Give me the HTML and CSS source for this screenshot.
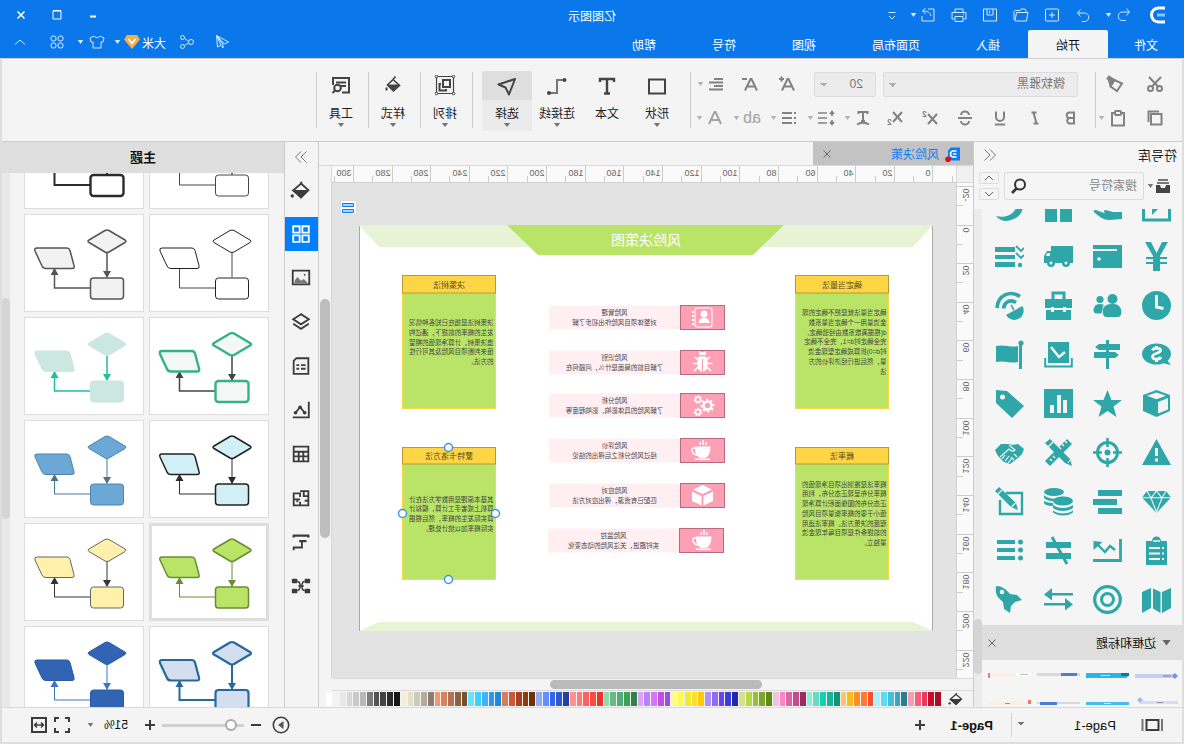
FILE: index.html
```html
<!DOCTYPE html>
<html lang="zh-CN">
<head>
<meta charset="utf-8">
<title>亿图图示</title>
<link rel="stylesheet" href="styles.css">
</head>
<body>
<div class="app">
<header class="top">
  <div class="titlebar">
    <div class="quick">
      <svg class="logo" viewBox="0 0 16 18"><path d="M0 2H6.500A7 7 0 0 1 6.500 16H0" fill="none" stroke="#fff" stroke-width="3"/><path d="M0 9H8" stroke="#8cc3ff" stroke-width="3"/></svg>
      <button class="tb undo" aria-label="撤销"><svg class="i16" viewBox="0 0 16 16"><path d="M5.500 1.500 2.500 5l3 3.500M3 5h6.500a4 4 0 0 1 0 8.500H6"/></svg></button><i class="caret light"></i>
      <button class="tb redo" aria-label="恢复"><svg class="i16" viewBox="0 0 16 16"><path d="M10.500 2.500 13.500 6l-3 3.500M13 6H6.500a4 4 0 0 0 0 8.500H9"/></svg></button>
      <button class="tb" aria-label="新建"><svg class="i16" viewBox="0 0 16 16"><rect x="1.500" y="2" width="13" height="12" rx="1"/><path d="M8 5v6M5 8h6"/></svg></button>
      <button class="tb" aria-label="打开"><svg class="i16" viewBox="0 0 16 16"><path d="M1 5.500h11.500l1.500 8.500H2.500zM3 5.500V3.500l1-1.500h4l1 1.500h5l1 1V13"/></svg></button>
      <button class="tb" aria-label="保存"><svg class="i16" viewBox="0 0 16 16"><path d="M1.500 2h13v12h-13zM5 2v6h6V2M8.500 4v2"/></svg></button>
      <button class="tb" aria-label="打印"><svg class="i16" viewBox="0 0 16 16"><path d="M4 5.500V2h8v3.500M3 12H1V5.500h14V12h-2M4 9.500h8V14.500H4zM3 7.500h1"/></svg></button>
      <button class="tb" aria-label="导出"><svg class="i16" viewBox="0 0 16 16"><path d="M8 2H2v12h12V9M5 9c1-4 4-5 8-5M10.500 1 13.500 4l-3 3"/></svg></button><i class="caret light near"></i>
      <button class="tb more" aria-label="更多"><svg class="i16" viewBox="0 0 16 16"><path d="M4.500 5.500h7M5 9l3 3 3-3"/></svg></button>
    </div>
    <h1 class="apptitle">亿图图示</h1>
    <div class="win">
      <button aria-label="最小化"><svg class="i16" viewBox="0 0 16 16"><path d="M5 9.500h6" stroke-width="2"/></svg></button>
      <button aria-label="最大化"><svg class="i16" viewBox="0 0 16 16"><path d="M4 4h8v8H4zM4 3.500h8"/></svg></button>
      <button aria-label="关闭"><svg class="i16" viewBox="0 0 16 16"><path d="M4.500 4.500l7 7M11.500 4.500l-7 7" stroke-width="1.600"/></svg></button>
    </div>
  </div>
  <nav class="tabs">
    <a class="tab first" href="#">文件</a><a class="tab on" href="#">开始</a><a class="tab" href="#">插入</a><a class="tab wide" href="#">页面布局</a><a class="tab" href="#">视图</a><a class="tab" href="#">符号</a><a class="tab" href="#">帮助</a>
    <div class="account">
      <button aria-label="发送"><svg class="i16" viewBox="0 0 16 16"><path d="M13.500 1.500 1.500 8l4 2zM13.500 1.500 12.500 13 9 11zM13.500 1.500 7 10.500V14L9 11.500"/></svg></button>
      <button class="share" aria-label="分享"><svg class="i16" viewBox="0 0 16 16"><circle cx="4" cy="8" r="2.500"/><circle cx="12.500" cy="3.500" r="2"/><circle cx="12.500" cy="12.500" r="2"/><path d="M6.500 7l4-2.500M6.500 9l4 2.500"/></svg></button>
      <button class="user">大米<svg class="gem" viewBox="0 0 16 14"><path d="M3 0h10l3 4.500L8 14 0 4.500z" fill="#f3b04a"/><path d="M4.500 4 8 8.500 11.500 4" fill="none" stroke="#fff" stroke-width="1.600"/></svg></button><i class="caret light"></i>
      <button class="skin" aria-label="皮肤"><svg class="i16" viewBox="0 0 16 16"><path d="M5 2C6 4 10 4 11 2l4 2-1 4h-2v6H4V8H2L1 4z"/></svg></button><i class="caret light"></i>
      <button class="apps" aria-label="应用"><svg class="i16" viewBox="0 0 16 16"><rect x="2" y="2" width="5" height="5" rx="2"/><rect x="9" y="2" width="5" height="5" rx="2"/><rect x="2" y="9" width="5" height="5" rx="2"/><rect x="9" y="9" width="5" height="5" rx="2"/></svg></button>
      <button class="fold" aria-label="折叠"><svg class="i16" viewBox="0 0 16 16"><path d="M3 10.500 8 6l5 4.500"/></svg></button>
    </div>
  </nav>
</header>

<div class="frame">
<section class="ribbon" aria-label="工具栏">
  <div class="grp clip">
    <div class="row"><button class="rb w30" aria-label="剪切"><svg class="i18" viewBox="0 0 18 18"><path d="M3 2l9 9.500M15 2 6 11.500"/><circle cx="4.500" cy="13.500" r="2.500"/><circle cx="13.500" cy="13.500" r="2.500"/></svg></button><button class="rb w30" aria-label="格式刷"><svg class="i18" viewBox="0 0 18 18"><path d="M2 8.500 9.500 5l4 6.500-6.500 4.500z"/><path d="M9.500 5l4-2.500 1.500-1 1.500 2-1.500 2-1.500 5z" fill="#828282"/></svg></button></div>
    <div class="row"><button class="rb w30" aria-label="复制"><svg class="i18" viewBox="0 0 18 18"><path d="M2.500 5H13v10.500H2.500zM5 2.500h10.500V13"/></svg></button><button class="rb w24" aria-label="粘贴"><svg class="i18" viewBox="0 0 18 18"><path d="M6 4H3v12.500h12V4h-3"/><rect x="6" y="2" width="6" height="4" rx="1"/></svg></button><i class="caret"></i></div>
  </div>
  <div class="grp font">
    <div class="row r1"><select class="sel face" aria-label="字体"><option>微软雅黑</option></select><select class="sel size" aria-label="字号"><option>20</option></select>
      <button class="rb w30 gap" aria-label="增大字号"><svg class="i18" viewBox="0 0 18 18"><path d="M2 15.500 7.500 4h1L14 15.500M4.500 11.500h7M12 4h5M14.500 1.500v5"/></svg></button>
      <button class="rb w30" aria-label="减小字号"><svg class="i18" viewBox="0 0 18 18"><path d="M2 15.500 7.500 4h1L14 15.500M4.500 11.500h7M12 4h5"/></svg></button>
      <span class="combo"><button class="rb w24" aria-label="对齐"><svg class="i18" viewBox="0 0 18 18"><path d="M2 4h9M2 7.500h14M2 11h9M2 14.500h14"/></svg></button><i class="caret"></i></span></div>
    <div class="row">
      <button class="rb w35" aria-label="加粗"><svg class="i18" viewBox="0 0 18 18"><path d="M5 3.500h4.500a2.500 2.500 0 0 1 0 5.500H5zM5 9h5a3 3 0 0 1 0 5.500H5z"/></svg></button><button class="rb w35" aria-label="斜体"><svg class="i18" viewBox="0 0 18 18"><path d="M7.500 3.500h5M5.500 14.500h5M10.500 3.500l-3 11"/></svg></button><button class="rb w35" aria-label="下划线"><svg class="i18" viewBox="0 0 18 18"><path d="M5 2.500V8a4 4 0 0 0 8 0V2.500M4 15.500h10"/></svg></button><button class="rb w35" aria-label="删除线"><svg class="i18" viewBox="0 0 18 18"><path d="M13 6a4 3.500 0 0 0-8 0M2 9h14M5 12a4 3.500 0 0 0 8 0"/></svg></button><button class="rb w35" aria-label="上标"><svg class="i18" viewBox="0 0 18 18"><path d="M2 5l9 10M11 5 2 15"/><path d="M13 4c0-2 3-2 3 0 0 1-3 2-3 3.500h3.500" stroke-width="1.200"/></svg></button><button class="rb w35" aria-label="下标"><svg class="i18" viewBox="0 0 18 18"><path d="M2 3l9 10M11 3 2 13"/><path d="M13 12c0-2 3-2 3 0 0 1-3 2-3 3.500h3.500" stroke-width="1.200"/></svg></button>
      <span class="combo c0"><button class="rb w24" aria-label="文字效果"><svg class="i18" viewBox="0 0 18 18"><path d="M4.500 5V3h9v2M9 3v9M7 12h4M3 15.500c4-2.500 8-2.500 12 0"/></svg></button><i class="caret"></i></span><span class="combo"><button class="rb w24" aria-label="行距"><svg class="i18" viewBox="0 0 18 18"><path d="M8 4h9M8 9h9M8 14h9M3 3v4M3 11v4M1 5l2-2.500L5 5M1 13l2 2.500L5 13" stroke-width="1.700"/></svg></button><i class="caret"></i></span><span class="combo"><button class="rb w24" aria-label="项目符号"><svg class="i18" viewBox="0 0 18 18"><path d="M6 4h10M6 9h10M6 14h10M2 4h2M2 9h2M2 14h2"/></svg></button><i class="caret"></i></span><span class="combo"><button class="rb w24 ab">ab</button><i class="caret"></i></span><span class="combo"><button class="rb w24" aria-label="字体颜色"><svg class="i18 pale" viewBox="0 0 18 18"><path d="M3 15 8.500 3h1L15 15M5.500 11h7"/></svg></button><i class="caret"></i></span>
    </div>
  </div>
  <div class="grp big">
    <button class="bb"><svg class="i24" viewBox="0 0 24 24"><path d="M4 4.500h16v14H4z"/></svg><span>形状</span><i class="caret dark"></i></button>
    <button class="bb"><svg class="i24" viewBox="0 0 24 24"><path d="M5 7V4h14v3M12 4v14.500M9 18.500h6" stroke-width="2.400"/></svg><span>文本</span></button>
    <button class="bb"><svg class="i24" viewBox="0 0 24 24"><path d="M4 5h8v13h7" stroke="#777"/><circle cx="4.500" cy="5" r="2" fill="#444" stroke="none"/><circle cx="20" cy="18" r="2" fill="#444" stroke="none"/></svg><span>连接线</span><i class="caret dark"></i></button>
    <button class="bb sel-on"><svg class="i24" viewBox="0 0 24 24"><path d="M4 4 20.500 9.500 13.500 12.500 10 19.500z" stroke-linejoin="round"/></svg><span>选择</span><i class="caret dark"></i></button>
  </div>
  <div class="grp one"><button class="bb"><svg class="i24" viewBox="0 0 24 24"><path d="M3.500 1.500h17v17h-17z" stroke-width="1.200"/><path d="M7 5h7v7H7zM16 9h1.500v6.500H11V14"/><g fill="#f4f4f4" stroke-width="1"><circle cx="3.500" cy="1.500" r="1.300"/><circle cx="20.500" cy="1.500" r="1.300"/><circle cx="3.500" cy="18.500" r="1.300"/><circle cx="20.500" cy="18.500" r="1.300"/></g></svg><span>排列</span><i class="caret dark"></i></button></div>
  <div class="grp one"><button class="bb"><svg class="i24" viewBox="0 0 24 24"><path d="M9.500 1.500 12 4.500M12 4.500 17.500 10l-6 6-6-5.500z" stroke-width="1.600"/><path d="M5.500 10h12.500l-6.500 6z" fill="#444" stroke-width="1"/><path d="M18.500 12.500v3" stroke-width="2"/></svg><span>样式</span><i class="caret dark"></i></button></div>
  <div class="grp one"><button class="bb"><svg class="i24" viewBox="0 0 24 24"><path d="M11 17.500H4V3h16v7M7 7.500h10M7 11h6"/><circle cx="15.500" cy="13" r="3.300"/><path d="M18 15.500l2.500 2.500"/></svg><span>工具</span><i class="caret dark"></i></button></div>
</section>

<main class="work">
<aside class="lib">
  <div class="libhead"><h2>符号库</h2><button aria-label="收起"><svg class="i16 g" viewBox="0 0 16 16"><path d="M8 2.500 2.500 8 8 13.500M13.500 2.500 8 8l5.500 5.500"/></svg></button></div>
  <div class="find">
    <button class="drawer" aria-label="库菜单"><svg viewBox="0 0 16 16"><path d="M3 1h10v2H3zM2 4h12v2H2z" fill="#777"/><path d="M1 7h4l1 3h4l1-3h4v8H1z" fill="#444"/></svg></button><i class="caret dark"></i>
    <label class="search"><input type="text" placeholder="搜索符号" aria-label="搜索符号"><svg viewBox="0 0 16 16"><circle cx="7" cy="6.500" r="5" fill="none" stroke="#333" stroke-width="2"/><path d="M10.500 10.500 15 15" stroke="#333" stroke-width="2.600"/></svg></label>
    <div class="updown"><button aria-label="上"><svg viewBox="0 0 12 8"><path d="M2 6l4-4 4 4"/></svg></button><button aria-label="下"><svg viewBox="0 0 12 8"><path d="M2 2l4 4 4-4"/></svg></button></div>
  </div>
  <div class="libbody">
    <div class="libcol">
    <div class="symwrap"><div class="syms">
      <svg viewBox="0 0 29 29"><path d="M1.500 10v17h26V10" fill="none" stroke="currentColor" stroke-width="3"/><path d="M11 14h8v8z"/></svg>
      <svg viewBox="0 0 29 29"><path d="M0 19h9l7-2c3 0 3 3 0 3h-4 6l8-3c3 0 3 2 1 3-5 4-8 7-14 7-5 0-8-1-13-1z"/></svg>
      <svg viewBox="0 0 29 29"><path d="M1 12h12v17H1zM16 12h12v17H16z"/></svg>
      <svg viewBox="0 0 29 29"><path d="M1 14c6 0 7 1 8 3 4 6 11 8 19 6-4 5-10 6-15 4C6 25 2 21 1 14z"/></svg>

      <svg viewBox="0 0 29 29"><path d="M3 0h6l5.500 11L20 0h6l-8 14v1h7v2h-7v3h7v2h-7v7h-7v-7H4v-2h7v-3H4v-2h7v-1z"/></svg>
      <svg viewBox="0 0 29 29"><path d="M0 3h29v23H0z"/><path d="M5 8h24" class="w" stroke-width="2"/><circle cx="23" cy="17" r="1.800" class="wf"/></svg>
      <svg viewBox="0 0 29 29"><path d="M0 4h22v5h4l3 5v7H0z"/><circle cx="7" cy="21" r="4" /><circle cx="22" cy="21" r="4"/><circle cx="7" cy="21" r="1.500" class="wf"/><circle cx="22" cy="21" r="1.500" class="wf"/><path d="M23 11h3l1 3h-4z" class="wf"/></svg>
      <svg viewBox="0 0 29 29"><path d="M9 5h20v5H9zM9 13h20v4H9zM9 20h20v5H9z"/><circle cx="4" cy="23" r="2.200"/><path d="M8 4 3 9 0 6M8 11l-5 5-3-3" fill="none" stroke="currentColor" stroke-width="1.800"/></svg>

      <svg viewBox="0 0 29 29"><circle cx="14.500" cy="14.500" r="14.500"/><path d="M14.500 4v12l-7 1.500" class="w" stroke-width="3"/></svg>
      <svg viewBox="0 0 29 29"><circle cx="9.500" cy="8" r="5"/><path d="M1 18c2-4 4-5 8.500-5s8 1 9.500 5c1 5-1 8-3 8H4c-3 0-4-4-3-8z"/><circle cx="22" cy="8.500" r="3.600"/><path d="M18.500 13.500c5-1.500 9 0 10 5 0 3-1 4-3 4h-5z"/></svg>
      <svg viewBox="0 0 29 29"><path d="M9 9V2h11v7" fill="none" stroke="currentColor" stroke-width="3"/><path d="M1 8h27v9H1zM2 19h25v10H2z"/><path d="M7 16h3v5H7zM19 16h3v5h-3z" class="wf"/></svg>
      <svg viewBox="0 0 29 29"><path d="M4 5.500C14-1 26 4 27 17" fill="none" stroke="currentColor" stroke-width="3.600"/><path d="M8 11.500c6-4 12 0 12.500 6" fill="none" stroke="currentColor" stroke-width="3.600"/><path d="M1.500 15 18 24A9 9 0 0 1 1.500 15z"/><path d="M10 19l3-5" stroke="currentColor" stroke-width="1.500"/></svg>

      <svg viewBox="0 0 29 29"><ellipse cx="14.500" cy="14" rx="14.500" ry="10.500"/><path d="M4 20 0 25l9-2z"/><path d="M18.500 10.500c-1-3-8-3-8 0s8 2.500 8 6-7 3.500-8.500.5M14.500 6v3M14.500 18v4" class="w" stroke-width="2.800"/></svg>
      <svg viewBox="0 0 29 29"><path d="M13 0h3v29h-3z"/><path d="M2 4h21l4 3-4 3H2zM28 12v6H7l-4-3 4-3z"/></svg>
      <svg viewBox="0 0 29 29"><path d="M4 2h21v21H4z"/><path d="M22 7l-8 10-6-5" class="w" stroke-width="2.400"/><path d="M1.200 18v8.500h26.600V18" fill="none" stroke="currentColor" stroke-width="2"/></svg>
      <svg viewBox="0 0 29 29"><circle cx="3" cy="3" r="2.600"/><path d="M2 4h3v25H2zM6 6c7 2 13-2 22 0v16c-9-2-14 2-22 0z"/></svg>

      <svg viewBox="0 0 29 29"><path d="M14.500 1 28 6v16l-13.500 6L1 22V6z"/><path d="M14.500 3.500 24 6.700l-9.500 3.600L5 6.700zM3 9l10 4v11.500L3 20.500z" class="wf"/></svg>
      <svg viewBox="0 0 29 29"><path d="M14.500 1l4 10H29l-8.500 6.500L23.500 28l-9-6-9 6 3-10.500L0 11h10.500z"/></svg>
      <svg viewBox="0 0 29 29"><path d="M0 0h29v29H0z"/><path d="M6 11h4v13H6zM12 6h4v18h-4zM19 16h4v8h-4z" class="wf"/></svg>
      <svg viewBox="0 0 29 29"><path d="M17 2 28 1v13L12 29 0 17z"/><circle cx="21.500" cy="8" r="2.500" class="wf"/></svg>

      <svg viewBox="0 0 29 29"><path d="M14.500 1 29 27H0z"/><path d="M14.500 10v8M14.500 20.500v3" class="w" stroke-width="3"/></svg>
      <svg viewBox="0 0 29 29"><circle cx="14.500" cy="14.500" r="10" fill="none" stroke="currentColor" stroke-width="3"/><path d="M14.500 0v9M14.500 20v9M0 14.500h9M20 14.500h9" stroke="currentColor" stroke-width="2.600"/><circle cx="14.500" cy="14.500" r="3"/></svg>
      <svg viewBox="0 0 29 29"><path d="M1 6 6 1l22 22-5 5zM23 1l5 4L8 25l-7 3 2-7z"/><path d="M5 25 3 22" class="w" stroke-width="1"/><path d="M8 3 6 5M11 6 9 8M14 9l-2 2M20 18l-2 2M23 21l-2 2M20 4l5 5" class="w" stroke-width="1.400"/></svg>
      <svg viewBox="0 0 29 29"><path d="M0 11 6 6l6 1 3-1 8 0 6 6-3 6-6 6-6 2-8-6-4-4z"/><path d="M15 7l-6 5c2 2 4 1 6-1l9 8M12 20l4 5M15 18l4 5M19 17l3 4M7 19l3-3M10 22l3-3" class="w" stroke-width="1.200"/></svg>

      <svg viewBox="0 0 29 29"><path d="M5 4h19l5 6.500L14.500 26 0 10.500z"/><path d="M0 10.800h29M9 11l5.500 14L20 11M5 4l4 7 5.500-7L20 11l4-7" class="w" stroke-width="1.100"/></svg>
      <svg viewBox="0 0 29 29"><path d="M0 3h24v6H0zM5 12h24v6H5zM0 21h24v6H0z"/></svg>
      <svg viewBox="0 0 29 29"><ellipse cx="19" cy="5" rx="10" ry="4"/><path d="M9 8c4 5 15 5 20 0v3c-4 4-12 4-16 2zM20 16c3 0 7-1 9-2v2c-2 3-5 3-9 3z"/><ellipse cx="10" cy="14" rx="10" ry="4.500"/><path d="M0 18c5 4 15 4 20 0v3c-5 4-15 4-20 0zM0 23.500c5 4 15 4 20 0v2c-5 4-15 4-20 0z"/></svg>
      <svg viewBox="0 0 29 29"><path d="M18 6H2v21h22V13" fill="none" stroke="currentColor" stroke-width="2.400"/><path d="M25 0l4 4L13 20l-7 3 2-7z"/><path d="M22 3l4 4M8.500 16l4 4" class="w" stroke-width="1.200"/></svg>

      <svg viewBox="0 0 29 29"><path d="M4 5h6a4.500 4.500 0 0 1 9 0h6v24H4z"/><path d="M11 5h7" class="w" stroke-width="1.500"/><path d="M11 12h11M11 17.500h11M11 23h11M7 12h2M7 17.500h2M7 23h2" class="w" stroke-width="2"/></svg>
      <svg viewBox="0 0 29 29"><path d="M1.500 3v21.500H29" fill="none" stroke="currentColor" stroke-width="2.800"/><path d="M7 14l5-4 5 6 8-8" fill="none" stroke="currentColor" stroke-width="2.400"/><path d="M28.500 5v9l-9-8z"/></svg>
      <svg viewBox="0 0 29 29"><path d="M2 6h25v6H2zM2 17h25v6H2z"/><path d="M21 1 6 28" stroke="currentColor" stroke-width="3"/></svg>
      <svg viewBox="0 0 29 29"><path d="M9 4h18v4H9zM9 12h18v4H9zM9 20h18v4H9z"/><circle cx="3.500" cy="6" r="2.500"/><circle cx="3.500" cy="14" r="2.500"/><circle cx="3.500" cy="22" r="2.500"/></svg>

      <svg viewBox="0 0 29 29"><path d="M0 3l9 4v21l-9-5zM10.500 7 18 3.500v20L10.500 28zM20 3l9 4v21l-9-5z"/></svg>
      <svg viewBox="0 0 29 29"><g fill="none" stroke="currentColor"><circle cx="14.500" cy="14.500" r="12.800" stroke-width="3.200"/><circle cx="14.500" cy="14.500" r="6" stroke-width="3"/></g></svg>
      <svg viewBox="0 0 29 29"><path d="M0 8h21V3l8 6.500-8 6v-5H0zM29 18H8v-5l-8 6.500 8 6v-5h21z"/></svg>
      <svg viewBox="0 0 29 29"><path d="M28 1c1 8-1 11-7 16l-1 7-6 4-1-7-4-4-7-2 5-5 7-1C18 4 22 1 28 1z"/><circle cx="22" cy="7" r="2.300" class="wf"/></svg>
    </div></div>
    <div class="cat"><span class="tri"></span><h3>边框和标题</h3><button aria-label="关闭分类"><svg viewBox="0 0 10 10"><path d="M1.500 1.500l7 7M8.500 1.500l-7 7"/></svg></button></div>
    <div class="borders">
      <svg viewBox="0 0 43 12"><path d="M4 5h39v4H4z" fill="#c5d0f0"/><path d="M0 7l3-3 3 3-3 3z" fill="#7b93dc"/><path d="M7 7h8" stroke="#6b7db5"/></svg>
      <svg viewBox="0 0 43 12"><path d="M0 4h43v5H2z" fill="#2cb4e8"/><path d="M0 4h8v3H0z" fill="#0877a8"/><path d="M19 6.500h9" stroke="#b8ecff"/></svg>
      <svg viewBox="0 0 43 12"><path d="M0 4h43v3H0z" fill="#d8d8d8"/><path d="M3 4h16v3H3z" fill="#4d7ddb"/></svg>
      <svg viewBox="0 0 43 12"><path d="M15 4h28v4H15z" fill="#fdf0e2"/><path d="M0 4h15v3H0z" fill="#fff"/><path d="M3 5.500h8" stroke="#bbb"/><path d="M41 4h2v5h-2z" fill="#e77"/></svg>
      <svg viewBox="0 0 43 12"><path d="M0 5h38v3H0z" fill="#d5ddf5"/><path d="M35 4l3-3 3 3-3 3z" fill="#a9b9ea"/><path d="M15 6.500h6" stroke="#8a96bb"/></svg>
      <svg viewBox="0 0 43 12"><path d="M0 6h43v3H0z" fill="#45bdf0"/><path d="M18 7.500h7" stroke="#c8f0ff"/></svg>
      <svg viewBox="0 0 43 12"><path d="M0 6h43v2H0z" fill="#d8d8d8"/><path d="M23 6h17v3H23z" fill="#4d7ddb"/></svg>
      <svg viewBox="0 0 43 12"><path d="M3 6h40v3H3z" fill="#fdf0e2"/><path d="M0 4h3v4H0z" fill="#e77"/><path d="M21 7.500h5" stroke="#b88"/></svg>
    </div>
    </div>
    <div class="track"><div class="thumb"></div></div>
  </div>
</aside>

<section class="center">
  <div class="docs"><div class="doc"><svg class="docicon" viewBox="0 0 16 16"><path d="M0 1.500h9l3 3v10H0z" fill="#0a7cf5"/><path d="M3.500 5H6.500a3 3 0 0 1 0 6H3.500M3.500 8H7" stroke="#fff" stroke-width="1.500" fill="none"/><circle cx="12" cy="13.200" r="2.800" fill="#f00"/></svg><a href="#">风险决策</a><button aria-label="关闭文档"><svg viewBox="0 0 10 10"><path d="M1.500 1.500l7 7M8.500 1.500l-7 7"/></svg></button></div></div>
  <div class="stage">
    <div class="corner"></div>
    <svg class="hruler" id="hruler"></svg>
    <svg class="vruler" id="vruler"></svg>
    <div class="canvas">
      <svg class="page" viewBox="0 0 1148 814" width="574" height="407">
        <path d="M0 2h1148v810H0z" fill="#fff"/>
        <path d="M1 2v810M1147 2v810" stroke="#aaa" stroke-width="2"/>
        <path d="M0 0h1148l-40 44H40zM40 794h1068l40 18H0z" fill="#e6f3d5"/>
        <path d="M298 0h554l-62 60H360z" fill="#b9e467"/>
        <text x="574" y="40" class="t-title">风险决策图</text>
        <g class="note"><rect x="89" y="101" width="186" height="266"/><rect class="nh" x="89" y="101" width="186" height="35"/><text class="nt" x="182" y="125">确定当量法</text>
          <text x="93" y="180"><tspan x="93">确定当量法就是把不确定的现</tspan><tspan x="93" dy="1.5em">金流量用一个确定当量系数</tspan><tspan x="93" dy="1.5em">d(根据离散系数由经验确定,</tspan><tspan x="93" dy="1.5em">完全确定时d=1，完全不确定</tspan><tspan x="93" dy="1.5em">时d=0)折算成确定型现金流</tspan><tspan x="93" dy="1.5em">量，然后进行经济评价的方</tspan><tspan x="93" dy="1.5em">法</tspan></text></g>
        <g class="note"><rect x="89" y="445" width="186" height="264"/><rect class="nh" x="89" y="445" width="186" height="33"/><text class="nt" x="182" y="468">概率法</text>
          <text x="93" y="523"><tspan x="93">概率法是推测出项目净现值的</tspan><tspan x="93" dy="1.5em">概率分布呈现正态分布，利用</tspan><tspan x="93" dy="1.5em">正态分布的图像面积计算净现</tspan><tspan x="93" dy="1.5em">值小于零的概率衡量项目风险</tspan><tspan x="93" dy="1.5em">程度的决策方法。概率法适用</tspan><tspan x="93" dy="1.5em">的前提条件是项目每年现金流</tspan><tspan x="93" dy="1.5em">量独立。</tspan></text></g>
        <g class="note"><rect x="875" y="101" width="186" height="266"/><rect class="nh" x="875" y="101" width="186" height="35"/><text class="nt" x="968" y="125">决策树法</text>
          <text x="879" y="200"><tspan x="879">决策树法是指在已知各种情况</tspan><tspan x="879" dy="1.5em">发生的概率的前提下，通过构</tspan><tspan x="879" dy="1.5em">造决策树，计算净现值的期望</tspan><tspan x="879" dy="1.5em">值来判断项目风险及其可行性</tspan><tspan x="879" dy="1.5em">的方法。</tspan></text></g>
        <g class="note"><rect x="875" y="445" width="186" height="264"/><rect class="nh" x="875" y="445" width="186" height="33"/><text class="nt" x="968" y="468">蒙特卡洛方法</text>
          <text x="879" y="553"><tspan x="879">其基本原理是用数学方法在计</tspan><tspan x="879" dy="1.5em">算机上或者手工计算，模拟计</tspan><tspan x="879" dy="1.5em">算实际发生的概率，然后根据</tspan><tspan x="879" dy="1.5em">实际概率加以统计处理。</tspan></text></g>
        <g class="step" transform="translate(416 160)"><rect class="band" x="90" y="1" width="262" height="48"/><rect class="tile" x="1" y="1" width="88" height="48"/><text x="221" y="20">风险管理</text><text x="221" y="40">对整体项目风险作出初步了解</text>
          <rect x="26" y="6" width="34" height="38" rx="5" fill="none" stroke="#ffe3ea" stroke-width="3"/><circle cx="42" cy="18" r="7" fill="#fff"/><path d="M31 36c0-14 22-14 22 0zM62 12h4v4h-4zM62 20h4v4h-4zM62 28h4v4h-4zM62 36h4v4h-4z" fill="#fff"/></g>
        <g class="step" transform="translate(416 250)"><rect class="band" x="90" y="1" width="262" height="48"/><rect class="tile" x="1" y="1" width="88" height="48"/><text x="221" y="20">风险识别</text><text x="221" y="40">了解目前的局面是什么，问题何在</text>
          <path d="M35 15q10-5 20 0v22q-10 12-20 0zM38 10a7 6 0 0 1 14 0z" fill="#fff"/><path d="M25 27h40M30 14l6 6M60 14l-6 6M28 42l8-8M62 42l-8-8M41 6l-3-3M49 6l3-3" stroke="#fff" stroke-width="3"/><path d="M45 18v24" stroke="#ff9fb5" stroke-width="2"/></g>
        <g class="step" transform="translate(416 336)"><rect class="band" x="90" y="1" width="262" height="48"/><rect class="tile" x="1" y="1" width="88" height="48"/><text x="221" y="20">风险分析</text><text x="221" y="40">了解风险的具体影响、影响程度等</text>
          <g fill="none" stroke="#fff"><circle cx="35" cy="25" r="8" stroke-width="5"/><circle cx="35" cy="25" r="12" stroke-width="4" stroke-dasharray="4 5"/><circle cx="54" cy="13" r="5" stroke-width="3"/><circle cx="54" cy="13" r="7" stroke-width="3" stroke-dasharray="3 3"/><circle cx="54" cy="38" r="5" stroke-width="3"/><circle cx="54" cy="38" r="7" stroke-width="3" stroke-dasharray="3 3"/></g></g>
        <g class="step" transform="translate(416 426)"><rect class="band" x="90" y="1" width="262" height="48"/><rect class="tile" x="1" y="1" width="88" height="48"/><text x="221" y="20">风险评价</text><text x="221" y="40">经过风险分析之后得出的结论</text><use href="#cup"/></g>
        <g class="step" transform="translate(416 516)"><rect class="band" x="90" y="1" width="262" height="48"/><rect class="tile" x="1" y="1" width="88" height="48"/><text x="221" y="20">风险应对</text><text x="221" y="40">匹配已有资源，得出应对方法</text>
          <path d="M45 4l19 9-19 9-19-9zM24 17l19 9v19l-19-9zM66 17l-19 9v19l19-9z" fill="#fff"/></g>
        <g class="step" transform="translate(414 606)"><rect class="band" x="94" y="1" width="262" height="48"/><rect class="tile" x="5" y="1" width="88" height="48"/><text x="225" y="20">风险监控</text><text x="225" y="40">实时跟进，关注风险的动态变化</text><use href="#cup"/></g>
        <defs><g id="cup"><path d="M29 17h31q1 18-10 23H40Q29 36 29 17zM30 41h30v3H30z" fill="#fff"/><path d="M60 20q8-1 6 6t-10 8" fill="none" stroke="#fff" stroke-width="3"/><path d="M38 14V8M44 14V4M50 14V8" stroke="#fff" stroke-width="3"/></g></defs>
        <g fill="#fff" stroke="#3a94ee" stroke-width="3"><circle cx="969" cy="445" r="8"/><circle cx="875" cy="577" r="8"/><circle cx="1061" cy="577" r="8"/><circle cx="969" cy="709" r="8"/></g>
      </svg>
      <button class="float" aria-label="布局"><svg viewBox="0 0 14 12"><path d="M1.500 1.500h11v3h-11zM1.500 7.500h11v3h-11z" fill="#a9d2ff" stroke="#0a7cf5"/></svg></button>
    </div>
    <div class="vbar"><div class="vthumb"></div></div>
  </div>
  <div class="hbar"><div class="hthumb"></div></div>
  <div class="palette"><svg class="i16 bucket" viewBox="0 0 24 24"><use href="#bucket"/></svg><div class="swatches" id="swatches"></div></div>
</section>

<nav class="side" aria-label="面板">
  <button class="sc" aria-label="展开"><svg class="i16 g" viewBox="0 0 16 16"><path d="M2.500 2.500 8 8l-5.500 5.500M8 2.500 13.500 8 8 13.500"/></svg></button>
  <button aria-label="填充"><svg viewBox="0 0 24 24"><g id="bucket"><path d="M11 3l2 3M12 5l8 7-8 8-8-8z"/><path d="M5 13h15l-8 7z" fill="#3c3c3c"/><circle cx="21.500" cy="18.500" r="1.800" fill="#3c3c3c" stroke="none"/></g></svg></button>
  <button class="on" aria-label="主题"><svg viewBox="0 0 24 24"><path d="M3.500 3.500h7v7h-7zM13.500 3.500h7v7h-7zM3.500 13.500h7v7h-7zM13.500 13.500h7v7h-7z"/></svg></button>
  <button aria-label="图片"><svg viewBox="0 0 24 24"><path d="M3 4h18v15H3z"/><path d="M5 17l4-4 3 2 4-4 3 4v3H5z" fill="#777" stroke="none"/><circle cx="8" cy="8.500" r="1" fill="#3c3c3c" stroke="none"/></svg></button>
  <button aria-label="图层"><svg viewBox="0 0 24 24"><path d="M12 3.500l8.500 5.500-8.500 5.500L3.500 9zM3.500 14l8.500 5.500 8.500-5.500"/></svg></button>
  <button aria-label="备注"><svg viewBox="0 0 24 24"><path d="M4 3.500h13l3 3v14H4zM7 11h5M14 11h3M7 15h5M14 15h3"/></svg></button>
  <button aria-label="图表"><svg viewBox="0 0 24 24"><path d="M3.500 3v17H21M8 15l5-6 5 6"/><g fill="#3c3c3c" stroke="none"><circle cx="8" cy="15" r="2"/><circle cx="13" cy="9" r="2"/><circle cx="18" cy="15" r="2"/></g></svg></button>
  <button aria-label="表格"><svg viewBox="0 0 24 24"><path d="M4 4h16v16H4zM4 9.500h16M4 14.500h16M9.500 9.500V20M14.500 9.500V20"/></svg></button>
  <button aria-label="平面图"><svg viewBox="0 0 24 24"><path d="M13 6v5M13 16v4M13 4.500H4V20h16V7h-7M9 4v6H4M4 15h4M20 13.500h-7M16 13.500v3"/></svg></button>
  <button aria-label="甘特图"><svg viewBox="0 0 24 24"><path d="M3 5h18M4 5v2M20 5v2M6 11h8" stroke-width="2.600"/><path d="M11 11v7h9v3"/></svg></button>
  <button aria-label="脑图"><svg viewBox="0 0 24 24"><g fill="#3c3c3c" stroke="none"><rect x="2" y="4" width="6" height="5" rx="1"/><rect x="16" y="4" width="6" height="5" rx="1"/><rect x="2" y="15" width="6" height="5" rx="1"/><rect x="16" y="15" width="6" height="5" rx="1"/></g><path d="M8 7c4 0 2 5 4 5s0-5 4-5M8 17c4 0 2-5 4-5s0 5 4 5M9 12h6" stroke-width="1.600"/></svg></button>
</nav>

<aside class="themes">
  <h2>主题</h2>
  <div class="tbody"><div class="cards"><div class="cardgrid" id="cards"></div></div><div class="track t2"><div class="thumb"></div></div></div>
</aside>
</main>

<footer class="status">
  <button class="pv" aria-label="页面视图"><svg viewBox="0 0 24 16"><path d="M5.500 3h12v10h-12z" stroke-width="2"/><path d="M2 2v12M21.500 2v12" stroke="#777"/></svg></button>
  <select class="pagesel" aria-label="页面"><option>Page-1</option></select>
  <a class="pagetab" href="#">Page-1</a>
  <button class="add" aria-label="添加页面"><svg viewBox="0 0 12 12"><path d="M6 1v10M1 6h10"/></svg></button>
  <div class="zoombar">
    <button class="play" aria-label="播放"><svg viewBox="0 0 18 18"><circle cx="9" cy="9" r="7.700" stroke-width="1.600"/><path d="M6.500 5v8L12 9z" fill="#555" stroke="none"/></svg></button>
    <button class="zb" aria-label="缩小"><svg viewBox="0 0 12 12"><path d="M1 6h10"/></svg></button>
    <input class="slider" type="range" min="0" max="100" value="10" aria-label="缩放">
    <button class="zb" aria-label="放大"><svg viewBox="0 0 12 12"><path d="M1 6h10M6 1v10"/></svg></button>
    <span class="pct">51%</span><i class="caret dark"></i>
    <button class="full" aria-label="全屏"><svg viewBox="0 0 18 18"><path d="M6 2H2v4M12 2h4v4M2 12v4h4M16 12v4h-4"/></svg></button>
    <button class="fit" aria-label="适应宽度"><svg viewBox="0 0 18 18"><path d="M2 2h14v14H2z"/><path d="M5 9h8M7 6.500 4.500 9 7 11.500M11 6.500 13.500 9 11 11.500" stroke-width="1.500"/></svg></button>
  </div>
</footer>
</div>
</div>
<script src="script.js"></script>
</body>
</html>
```
FILE: styles.css
```css
* { box-sizing: border-box; }
html, body { height: 100%; margin: 0; }
body { font-family: "Liberation Sans", "Noto Sans CJK SC", sans-serif; font-size: 12px; color: #222; overflow: hidden; }
/* The whole interface is shown mirrored, glyphs included. */
.app { height: 100vh; display: flex; flex-direction: column; transform: scaleX(-1); background: #f4f4f4; }
h1, h2, h3 { margin: 0; font-weight: 400; font-size: 12px; }
a { color: inherit; text-decoration: none; }
button { border: 0; background: none; padding: 0; margin: 0; font: inherit; color: inherit; display: inline-flex; align-items: center; justify-content: center; flex: none; }
select, input { font: inherit; margin: 0; }
svg { display: block; flex: none; }
button svg, .bucket { fill: none; stroke: #3c3c3c; stroke-width: 2; }
.i16 { width: 16px; height: 16px; }
.i18 { width: 18px; height: 18px; }
.i24 { width: 24px; height: 24px; }
.g { stroke: #777; stroke-width: 1; }
.caret { width: 7px; height: 4px; background: #b4b4b4; clip-path: polygon(10% 0, 90% 0, 50% 100%); flex: none; }
.caret.dark { background: #777; }
.caret.light { background: #d5e9ff; }

/* title bar */
.top { background: #0a77eb; color: #fff; height: 58px; flex: none; }
.top button svg { stroke: #d5e9ff; stroke-width: 1; }
.titlebar { display: grid; grid-template-columns: 1fr auto 1fr; height: 30px; align-items: center; }
.quick { display: flex; align-items: center; padding-left: 19px; }
.logo { width: 16px; height: 18px; margin-right: 15px; }
.quick .tb { width: 31px; }
.quick .tb.undo { width: 20px; margin-right: 2px; }
.quick .tb.redo { margin-left: 6px; }
.quick .near { margin-left: -4px; }
.quick .tb.more { width: 36px; }
.apptitle { font-size: 12px; }
.win { display: flex; justify-content: flex-end; padding-right: 3px; }
.win button { width: 36px; }
.win button svg { stroke-width: 1; stroke: #fff; }
.tabs { display: flex; height: 28px; }
.tab { width: 80px; display: flex; align-items: center; justify-content: center; }
.tab.first { width: 76px; }
.tab.wide { width: 104px; }
.tab.on { background: #f4f4f4; color: #111; border-radius: 2px 2px 0 0; }
.account { margin-left: auto; display: flex; align-items: center; padding: 0 12px 4px 0; }
.account .share { margin-left: 19px; margin-right: 13px; }
.account .user { gap: 2px; margin-right: 3px; }
.gem { width: 16px; height: 14px; }
.account .user .gem { stroke: none; }
.account .skin { margin: 0 5px 0 9px; }
.account .apps { margin: 0 21px 0 12px; }

.frame { flex: 1; min-height: 0; display: flex; flex-direction: column; border: solid #dedede; border-width: 0 2px 2px; }

/* ribbon */
.ribbon { display: flex; height: 84px; flex: none; border-top: 1px solid #d0d0d0; border-bottom: 1px solid #ccc; padding-top: 8px; }
.grp { position: relative; padding-right: 6px; }
.grp::after { content: ""; position: absolute; right: 0; top: 5px; width: 1px; height: 56px; background: #ccc; }
.row { display: flex; height: 34px; align-items: center; }
.rb svg { stroke: #828282; }
.rb .pale { stroke: #a3a3a3; }
.w30 { width: 30px; } .w24 { width: 24px; } .w35 { width: 35px; }
.clip { padding: 0 1px 0 12px; }
.clip .row { gap: 10px; }
.clip .row .caret { margin-left: -9px; margin-right: 2px; }
.font { padding-left: 7px; }
.r1 { padding-left: 10px; gap: 7px; }
.sel { appearance: none; height: 25px; border: 1px solid #dcdcdc; border-radius: 2px; color: #777; padding: 0 12px; background: linear-gradient(to bottom right, #b0b0b0 50%, transparent 50%) right 5px top 10px / 4px 4px no-repeat, linear-gradient(to bottom left, #b0b0b0 50%, transparent 50%) right 9px top 10px / 4px 4px no-repeat #ececec; }
.sel.face { width: 195px; }
.sel.size { width: 62px; }
.gap { margin-left: 5px; }
.combo { display: flex; align-items: center; margin-left: 6px; }
.r1 .combo { margin-left: 0; }
.combo.c0 { margin-left: 3px; }
.ab { font-size: 16px; color: #a3a3a3; }
.big { display: flex; padding: 0 10px 0 8px; }
.bb { flex-direction: column; justify-content: flex-start; width: 50px; height: 60px; margin-top: 4px; padding-top: 4px; border-radius: 2px; }
.bb span { line-height: 18px; margin-top: 6px; }
.bb .caret { width: 8px; }
.sel-on { background: linear-gradient(#dedede 29px, #ebebeb 29px); }
.bb svg { stroke: #444; }
.one { padding: 0 0 0 2px; }

/* workspace */
.work { flex: 1; min-height: 0; display: flex; }
.lib { width: 209px; flex: none; border-right: 1px solid #ccc; display: flex; flex-direction: column; background: #f5f5f5; }
.libhead { display: flex; justify-content: space-between; align-items: center; height: 25px; padding: 0 8px 0 5px; }
.libhead h2 { font-size: 13px; }
.find { display: flex; align-items: center; height: 38px; padding: 0 4px 0 11px; flex: none; margin-bottom: 4px; }
.drawer svg { width: 16px; height: 16px; stroke: none; }
.find > .caret { margin: 0 3px 0 1px; }
.search { width: 140px; height: 28px; border: 1px solid #ddd; border-radius: 2px; display: flex; align-items: center; padding: 0 6px; }
.search input { border: 0; background: none; flex: 1; min-width: 0; padding: 0; outline: 0; }
.search input::placeholder { color: #888; opacity: 1; }
.search svg { width: 16px; height: 16px; }
.updown { margin-left: 5px; display: grid; gap: 4px; }
.updown button { width: 20px; height: 12px; border: 1px solid #ddd; border-radius: 2px; }
.updown svg { width: 12px; height: 8px; stroke-width: 1; stroke: #666; }
.libbody { flex: 1; min-height: 0; display: flex; }
.libcol { flex: 1; min-width: 0; display: flex; flex-direction: column; overflow: hidden; }
.symwrap { flex: 1; min-height: 0; overflow: hidden; display: flex; flex-direction: column; justify-content: flex-end; padding-bottom: 11px; }
.syms { display: grid; grid-template-columns: repeat(4, 29px); justify-content: space-between; row-gap: 20px; padding: 0 13px 0 11px; color: #2fa7a9; }
.syms svg { width: 29px; height: 29px; fill: currentColor; }
.syms .w { stroke: #f5f5f5; fill: none; }
.syms .wf { fill: #f5f5f5; }
.cat { height: 35px; flex: none; background: #dedede; display: flex; align-items: center; padding: 0 5px 0 11px; gap: 6px; }
.cat h3 { flex: 1; color: #111; }
.tri { width: 9px; height: 6px; background: #666; clip-path: polygon(0 0, 100% 0, 50% 100%); }
.cat svg, .doc button svg { width: 10px; height: 10px; stroke: #666; stroke-width: 1; }
.borders { height: 47px; flex: none; overflow: hidden; display: grid; grid-template-columns: repeat(4, 43px); gap: 15px 6px; padding: 9px 4px 0; }
.borders svg { width: 43px; height: 12px; }
.track { width: 8px; flex: none; background: #ececec; padding-top: 410px; }
.track .thumb { height: 55px; border-radius: 4px; background: #d5d5d5; }

.center { flex: 1; min-width: 0; display: flex; flex-direction: column; }
.docs { height: 24px; flex: none; border-bottom: 1px solid #d8d8d8; }
.doc { width: 160px; height: 23px; background: #c3c3c3; display: flex; align-items: center; padding: 0 9px 0 13px; gap: 5px; color: #0a7cf5; }
.doc a { flex: 1; }
.docicon { width: 16px; height: 16px; }
.stage { flex: 1; min-height: 0; display: grid; grid-template: 17px 1fr / 17px 1fr 13px; }
.corner { background: #f0f0f0; border-right: 1px solid #d8d8d8; border-bottom: 1px solid #d8d8d8; }
.hruler, .vruler { width: 100%; height: 100%; background: #fafafa; overflow: hidden; font-size: 9px; fill: #666; }
.hruler { border-bottom: 1px solid #d0d0d0; }
.vruler { border-right: 1px solid #d0d0d0; grid-row: 2; grid-column: 1; min-height: 0; }
.hruler path, .vruler path { stroke: #ccc; fill: none; }
.canvas { position: relative; background: #e3e3e3; overflow: hidden; padding: 42px 0 0 23px; grid-row: 2; grid-column: 2; min-height: 0; }
.vbar { grid-row: 1 / 3; grid-column: 3; border-left: 1px solid #d8d8d8; padding: 133px 1px 0 1px; background: #f4f4f4; }
.vthumb { height: 239px; border-radius: 5px; background: #bdbdbd; }
.float { position: absolute; right: 8px; top: 17px; width: 17px; height: 15px; background: #fff; border: 1px solid #ddd; }
.float svg { width: 14px; height: 12px; stroke-width: 1; }
.hbar { height: 13px; flex: none; border: solid #dadada; border-width: 1px 0; margin-right: 13px; padding: 1px 0 0 211px; }
.hthumb { width: 212px; height: 9px; border-radius: 5px; background: #bababa; }
.palette { height: 16px; flex: none; display: flex; align-items: center; padding: 0 7px 0 9px; }
.bucket { stroke: #3c3c3c; margin-right: 7px; }
.swatches { flex: 1; display: flex; gap: 1px; height: 14px; }
.swatches i { flex: 1; }

.page text { font-size: 13px; fill: #444; }
.page .t-title { font-size: 28px; fill: #fff; text-anchor: middle; }
.page .nt { font-size: 16px; text-anchor: middle; fill: #554a20; }
.note rect { fill: #b9e467; stroke: #fed645; stroke-width: 2; }
.note .nh { fill: #fed645; stroke: #b89a30; }
.page .step text { text-anchor: middle; }
.step .band { fill: #ffeff3; }
.step .tile { fill: #ff9fb5; stroke: #b56a80; stroke-width: 2; }

.side { width: 35px; flex: none; border: solid #ccc; border-width: 0 1px; display: flex; flex-direction: column; }
.side button { height: 34px; margin-bottom: 10px; flex: none; }
.side button svg { width: 22px; height: 22px; }
.side .sc { height: 30px; margin-bottom: 1px; }
.side .sc svg { width: 16px; height: 16px; stroke: #777; stroke-width: 1; }
.side .on { background: #007fff; }
.side .on svg { stroke: #fff; }

.themes { width: 282px; flex: none; display: flex; flex-direction: column; }
.themes h2 { height: 31px; flex: none; background: #dedede; font-size: 13px; font-weight: 700; text-align: center; line-height: 31px; color: #111; }
.tbody { flex: 1; min-height: 0; display: flex; }
.cards { flex: 1; overflow: hidden; }
.cardgrid { display: grid; grid-template-columns: 120px 120px; gap: 5px; margin-top: -62px; padding-left: 15px; }
.card { height: 98px; border: 1px solid #dcdcdc; background: #fff; }
.card.on { border: 3px solid #dedede; }
.card svg { width: 118px; height: 96px; }
.card.on svg { margin: -2px; }
.t2 { padding-top: 125px; background: #e9e9e9; }
.t2 .thumb { height: 221px; }

/* status bar */
.status { height: 35px; flex: none; border-top: 1px solid #d8d8d8; display: flex; align-items: center; color: #111; font-size: 13px; }
.pv { margin-left: 18px; }
.pv svg { width: 24px; height: 16px; }
.pagesel { appearance: none; border: 0; border-right: 1px solid #d5d5d5; border-radius: 0; width: 117px; height: 24px; margin-left: 12px; padding: 0 0 0 12px; color: #111; background: linear-gradient(to bottom right, #777 50%, transparent 50%) right 5px top 9px / 4px 4px no-repeat, linear-gradient(to bottom left, #777 50%, transparent 50%) right 9px top 9px / 4px 4px no-repeat; }
.pagetab { font-weight: 700; margin-left: 18px; }
.add { margin-left: 24px; }
.add svg, .zb svg { width: 12px; height: 12px; }
.zoombar { margin-left: auto; display: flex; align-items: center; padding-right: 28px; }
.play svg { width: 18px; height: 18px; }
.play { margin-right: 10px; }
.slider { appearance: none; width: 82px; height: 14px; margin: 0 6px; background: linear-gradient(#d0d0d0, #d0d0d0) center / 100% 3px no-repeat; }
.slider::-webkit-slider-thumb { appearance: none; width: 12px; height: 12px; border: 2px solid #aaa; border-radius: 50%; background: #fff; }
.pct { margin: 0 10px 0 16px; width: 24px; font-size: 12px; }
.full { margin: 0 5px 0 16px; }
.full svg, .fit svg { width: 18px; height: 18px; }
```
FILE: script.js
```js
const NS = "http://www.w3.org/2000/svg";

// Rulers: one step is ten millimetres at the current zoom.
const STEP = 19.32;
function tick(svg, d) {
  const p = document.createElementNS(NS, "path");
  p.setAttribute("d", d);
  svg.append(p);
}
function label(svg, text, transform, anchor) {
  const t = document.createElementNS(NS, "text");
  t.textContent = text;
  t.setAttribute("transform", transform);
  t.setAttribute("text-anchor", anchor);
  svg.append(t);
}
const h = document.getElementById("hruler");
for (let v = -10; v <= 310; v += 10) {
  const x = Math.round(23.5 + (v / 10) * STEP) - 0.5;
  const major = v % 20 === 0;
  tick(h, `M${x} ${major ? 0 : 10}V17`);
  if (major) label(h, v, `translate(${x + 2} 10)`, "start");
}
const r = document.getElementById("vruler");
for (let v = -20; v <= 230; v += 10) {
  const y = Math.round(42.5 + (v / 10) * STEP) - 0.5;
  const major = v % 20 === 0;
  tick(r, `M${major ? 0 : 10} ${y}H17`);
  if (major) label(r, v, `translate(10 ${y + 2}) rotate(-90)`, "end");
}

// Colour swatches
const colors = `ab0d22 c90c2e ea3a5c f65e7e fb9bb0 267f92 38a5c2 40c0de 5cdcf2 a8f3ff
f8502b fb7c38 fc9024 fdb81a fec761 16917a 1ab598 17cfb2 68dac4 8aeeda
992b5e c44b8a e064a8 fb85c6 f0c2de 5f8a14 7ba52d 99c12a b6d650 d4e08d
2427a8 3a3edb 6744f0 8f6cf8 ae92f5 fdca08 fcdb34 f1ea2e fbf952 fcfc88
9a4fdf c24eea d874fa bb80fc dba2fb 2f8244 3da054 52ae78 66bb85 92d6ab
ea3528 fc4a3d fb6262 fd7a7a fe938c 2142a2 2f58d2 3366f0 668cff 8cacf8
742f05 95380a a84026 c95a36 de7858 1a8adb 2a97f0 46b0fe 3cd0fe 6de2ff
77502f 93603e b47350 d3845c f7966c 8b7d72 b3ac9c cccaba e6dfce f5eedc
161616 2c2c2c 434343 545454 7b7b7b b8b8b8 c9c9c9 d8d8d8 e7e7e7 f3f3f3 ffffff`.split(/\s+/);
document.getElementById("swatches").innerHTML =
  colors.map(c => `<i style="background:#${c}"></i>`).join("");

// Theme previews: fill, outline, outline width, connector colour, connector width, arrowheads
const themes = [
  ["#fff", "#444", 1, "#444", 1, 1], ["#fff", "#2b2b2b", 2.4, "#2b2b2b", 2, 1],
  ["#fff", "#222", 1, "#444", 1, 0], ["#f2f2f2", "#555", 1.5, "#555", 1.5, 1],
  ["#f3f8f6", "#35b18a", 2.4, "#444", 1.5, 1], ["#cce7df", "#cce7df", 1, "#1fbf9c", 1.5, 1],
  ["#d0f0f6", "#222", 1.5, "#2b2b2b", 1, 1], ["#6ca8d6", "#4f83aa", 1, "#4a7390", 1, 1],
  ["#b9e465", "#6a8c35", 1.5, "#6a8c35", 1, 1], ["#fff1ac", "#666", 1, "#333", 1, 1],
  ["#d3deef", "#26699f", 2.2, "#26699f", 2, 1], ["#3165b3", "#2a5aa5", 1, "#3f74c4", 1, 1]
];
document.getElementById("cards").innerHTML = themes.map(([f, s, w, l, lw, a], i) => `
<div class="card${i === 8 ? " on" : ""}"><svg viewBox="1 1 118 96">
<g fill="none" stroke="${l}" stroke-width="${lw}"><path d="M37 39V63M53 74H89.500V55"/></g>
${a ? `<path d="M33 57h8l-4 7zM85.500 61h8l-4-7z" fill="${l}"/>` : ""}
<g fill="${f}" stroke="${s}" stroke-width="${w}" stroke-linejoin="round">
<path d="M35 16.500q2-1 4 0L55 26q2 1 0 2.500L39 38q-2 1-4 0L19 28.500q-2-1.500 0-2.500z"/>
<path d="M77 34h30q3 0 2 3l-7 15q-1 2.500-4 2.500H72q-3 0-2-3l4-15q1-2.500 3-2.500z"/>
<rect x="20.500" y="64" width="33" height="21" rx="3"/></g></svg></div>`).join("");
```
